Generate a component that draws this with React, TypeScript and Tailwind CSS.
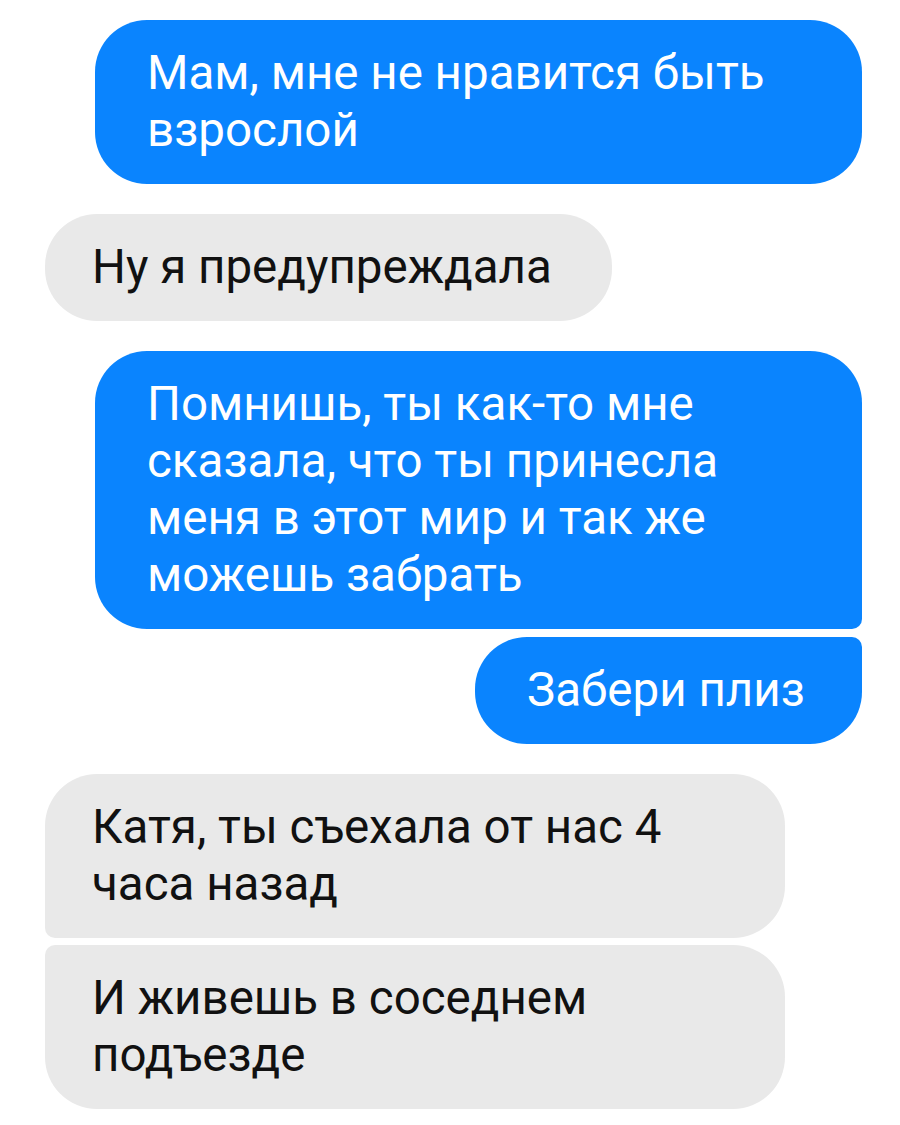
const blue = "bg-[#0a84fe] text-white";
const gray = "bg-[#e9e9e9] text-[#111111]";

type Msg = {
  lines: string[];
  mine: boolean;
  width: string;
  corners: string;
  gap: string;
};

const messages: Msg[] = [
  {
    lines: ["Мам, мне не нравится быть", "взрослой"],
    mine: true,
    width: "w-[767px]",
    corners: "rounded-[52px]",
    gap: "mt-0",
  },
  {
    lines: ["Ну я предупреждала"],
    mine: false,
    width: "w-[567px]",
    corners: "rounded-[52px]",
    gap: "mt-[30px]",
  },
  {
    lines: ["Помнишь, ты как-то мне", "сказала, что ты принесла", "меня в этот мир и так же", "можешь забрать"],
    mine: true,
    width: "w-[767px]",
    corners: "rounded-[52px] rounded-br-[10px]",
    gap: "mt-[30px]",
  },
  {
    lines: ["Забери плиз"],
    mine: true,
    width: "w-[387px]",
    corners: "rounded-[52px] rounded-tr-[10px]",
    gap: "mt-[8px]",
  },
  {
    lines: ["Катя, ты съехала от нас 4", "часа назад"],
    mine: false,
    width: "w-[740px]",
    corners: "rounded-[52px] rounded-bl-[10px]",
    gap: "mt-[30px]",
  },
  {
    lines: ["И живешь в соседнем", "подъезде"],
    mine: false,
    width: "w-[740px]",
    corners: "rounded-[52px] rounded-tl-[10px]",
    gap: "mt-[7px]",
  },
];

const Bubble = ({ msg }: { msg: Msg }) => {
  return (
    <div className={`flex ${msg.mine ? "justify-end pr-[38px]" : "justify-start pl-[45px]"} ${msg.gap}`}>
      <div
        className={`${msg.width} ${msg.corners} ${msg.mine ? blue : gray} ${msg.mine ? "pl-[52px]" : "pl-[47px]"} pr-6 py-[25px] text-[47.5px] leading-[57px]`}
      >
        {msg.lines.map((l, i) => (
          <div key={i} className="whitespace-nowrap">{l}</div>
        ))}
      </div>
    </div>
  );
};

export default function App() {
  return (
    <div className="w-[900px] h-[1125px] bg-white pt-[20px] overflow-hidden font-['Roboto',sans-serif]">
      {messages.map((m, i) => (
        <Bubble key={i} msg={m} />
      ))}
    </div>
  );
}
